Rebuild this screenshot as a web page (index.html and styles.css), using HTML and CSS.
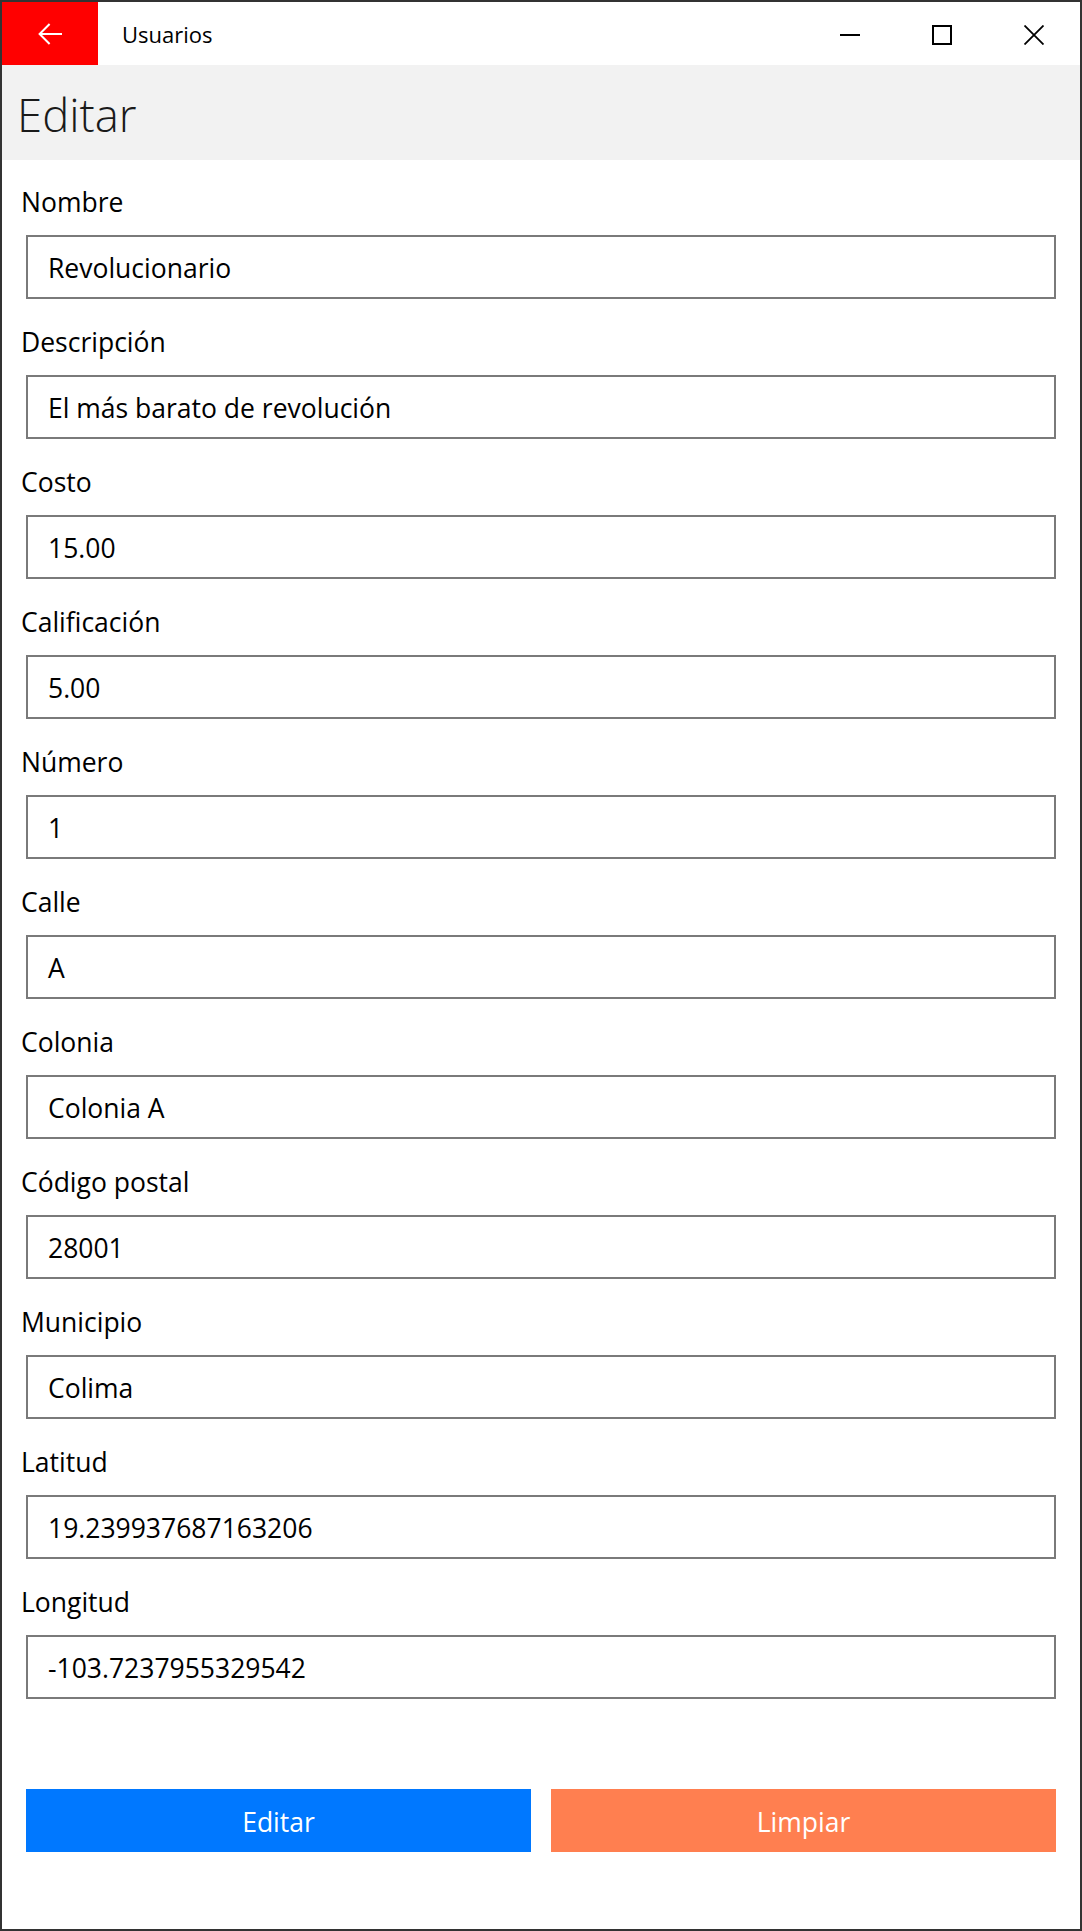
FILE: index.html
```html
<!DOCTYPE html>
<html lang="es">
<head>
<meta charset="utf-8">
<title>Usuarios</title>
<link rel="stylesheet" href="styles.css">
</head>
<body>
<div class="window">
  <header class="titlebar">
    <div class="back">
      <svg width="24" height="22" viewBox="0 0 24 22"><path d="M24 11H1.6M11.6 1L1.6 11L11.6 21" fill="none" stroke="#fff" stroke-width="2"/></svg>
    </div>
    <div class="title">Usuarios</div>
    <div class="caption">
      <div class="cbtn"><svg width="20" height="20" viewBox="0 0 20 20"><path d="M0 10H20" stroke="#000" stroke-width="2"/></svg></div>
      <div class="cbtn"><svg width="20" height="20" viewBox="0 0 20 20"><rect x="1" y="1" width="18" height="18" fill="none" stroke="#000" stroke-width="2"/></svg></div>
      <div class="cbtn"><svg width="20" height="20" viewBox="0 0 20 20"><path d="M0.5 0.5L19.5 19.5M19.5 0.5L0.5 19.5" stroke="#000" stroke-width="1.8"/></svg></div>
    </div>
  </header>
  <div class="pagehead">Editar</div>
  <main class="form">
    <div class="fields">
      <div class="field"><div class="label">Nombre</div><div class="input">Revolucionario</div></div>
      <div class="field"><div class="label">Descripción</div><div class="input">El más barato de revolución</div></div>
      <div class="field"><div class="label">Costo</div><div class="input">15.00</div></div>
      <div class="field"><div class="label">Calificación</div><div class="input">5.00</div></div>
      <div class="field"><div class="label">Número</div><div class="input">1</div></div>
      <div class="field"><div class="label">Calle</div><div class="input">A</div></div>
      <div class="field"><div class="label">Colonia</div><div class="input">Colonia A</div></div>
      <div class="field"><div class="label">Código postal</div><div class="input">28001</div></div>
      <div class="field"><div class="label">Municipio</div><div class="input">Colima</div></div>
      <div class="field"><div class="label">Latitud</div><div class="input">19.239937687163206</div></div>
      <div class="field"><div class="label">Longitud</div><div class="input">-103.7237955329542</div></div>
    </div>
    <div class="actions">
      <div class="btn btn-edit">Editar</div>
      <div class="btn btn-clear">Limpiar</div>
    </div>
  </main>
</div>
</body>
</html>
```
FILE: styles.css
```css
html, body {
  margin: 0;
  padding: 0;
  background: #ffffff;
}
body {
  font-family: "Open Sans", "Noto Sans", sans-serif;
  color: #000;
}
.window {
  box-sizing: border-box;
  width: 1082px;
  height: 1931px;
  border: 2px solid #333333;
  display: flex;
  flex-direction: column;
  background: #ffffff;
}
.titlebar {
  height: 63px;
  display: flex;
  align-items: stretch;
  flex: none;
}
.back {
  width: 96px;
  background: #ff0000;
  display: flex;
  align-items: center;
  justify-content: center;
}
.back svg { display: block; margin-top: 1px; }
.title {
  margin-left: 24px;
  font-size: 22px;
  line-height: 63px;
  padding-top: 1px;
  color: #000;
  flex: 1;
}
.caption {
  display: flex;
}
.cbtn {
  width: 92px;
  display: flex;
  align-items: center;
  justify-content: center;
}
.cbtn svg { display: block; margin-top: 3px; }
.pagehead {
  height: 95px;
  background: #f2f2f2;
  font-size: 45.5px;
  font-weight: 300;
  color: #1a1a1a;
  padding: 3px 0 0 15px;
  line-height: 92px;
  box-sizing: border-box;
  flex: none;
}
.form {
  padding: 23px 24px 0 24px;
  flex: 1;
}
.fields {
  display: flex;
  flex-direction: column;
  gap: 24px;
}
.field {
  display: flex;
  flex-direction: column;
  gap: 15px;
}
.label {
  height: 37px;
  line-height: 37px;
  padding-top: 1px;
  box-sizing: border-box;
  font-size: 26.5px;
  margin-left: -5px;
}
.input {
  box-sizing: border-box;
  height: 64px;
  border: 2px solid #7a7a7a;
  padding: 2px 0 0 20px;
  font-size: 26.5px;
  display: flex;
  align-items: center;
}
.actions {
  margin-top: 90px;
  display: grid;
  grid-template-columns: 1fr 1fr;
  gap: 20px;
}
.btn {
  height: 63px;
  display: flex;
  align-items: center;
  justify-content: center;
  color: #ffffff;
  font-size: 26.5px;
  padding-top: 2px;
  box-sizing: border-box;
}
.btn-edit { background: #0078ff; }
.btn-clear { background: #ff7f50; }
```
